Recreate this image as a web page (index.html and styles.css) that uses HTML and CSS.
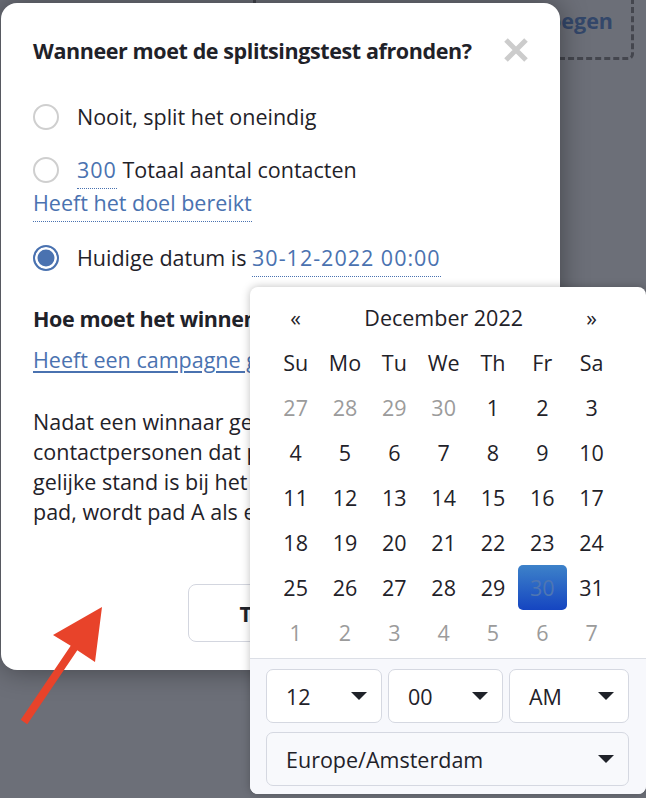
FILE: index.html
```html
<!DOCTYPE html>
<html>
<head>
<title>Splitsingstest</title>
<link rel="stylesheet" href="styles.css">
</head>
<body>
  <div class="dropzone"><span>+ Pad toevoegen</span></div>

  <div class="modal">
    <div class="modal-head">
      <h3>Wanneer moet de splitsingstest afronden?</h3>
      <button class="close" aria-label="Sluiten">
        <svg width="26" height="26" viewBox="0 0 26 26"><path d="M3 3 L23 23 M23 3 L3 23" stroke="#cccccc" stroke-width="5"/></svg>
      </button>
    </div>

    <label class="option first"><span class="radio"></span><span>Nooit, split het oneindig</span></label>
    <label class="option second"><span class="radio"></span><span><a class="dotted num">300</a> Totaal aantal contacten</span></label>
    <div class="goal"><a class="dotted">Heeft het doel bereikt</a></div>
    <label class="option third"><span class="radio checked"></span><span>Huidige datum is <a class="dotted num">30-12-2022 00:00</a></span></label>

    <h4>Hoe moet het winnende pad worden bepaald?</h4>
    <a class="metric">Heeft een campagne geopend</a>

    <p class="note">Nadat een winnaar gekozen is, ontvangen alle<br>contactpersonen dat pad. Als er een<br>gelijke stand is bij het bepalen van het winnende<br>pad, wordt pad A als eerste gekozen.</p>

    <div class="actions">
      <button class="btn">Terug</button>
      <button class="btn primary">Opslaan</button>
    </div>
  </div>

  <div class="datepicker">
    <div class="cal">
      <span>«</span><span class="month">December 2022</span><span>»</span>
      <span>Su</span><span>Mo</span><span>Tu</span><span>We</span><span>Th</span><span>Fr</span><span>Sa</span>
      <span class="muted">27</span><span class="muted">28</span><span class="muted">29</span><span class="muted">30</span><span>1</span><span>2</span><span>3</span>
      <span>4</span><span>5</span><span>6</span><span>7</span><span>8</span><span>9</span><span>10</span>
      <span>11</span><span>12</span><span>13</span><span>14</span><span>15</span><span>16</span><span>17</span>
      <span>18</span><span>19</span><span>20</span><span>21</span><span>22</span><span>23</span><span>24</span>
      <span>25</span><span>26</span><span>27</span><span>28</span><span>29</span><span class="active">30</span><span>31</span>
      <span class="muted">1</span><span class="muted">2</span><span class="muted">3</span><span class="muted">4</span><span class="muted">5</span><span class="muted">6</span><span class="muted">7</span>
    </div>
    <div class="time">
      <div class="row">
        <div class="sel hour">12<i class="caret"></i></div>
        <div class="sel minute">00<i class="caret"></i></div>
        <div class="sel ampm">AM<i class="caret"></i></div>
      </div>
      <div class="sel tz">Europe/Amsterdam<i class="caret"></i></div>
    </div>
  </div>

  <svg class="arrow" width="120" height="150" viewBox="0 0 120 150">
    <polygon points="102,17 53,45 70.7,55.8 20.7,129.8 27.3,134.2 77.3,60.2 95,72" fill="#e8432a"/>
  </svg>
</body>
</html>
```

FILE: styles.css
```css
body {
  margin: 0;
  width: 646px;
  height: 798px;
  overflow: hidden;
  position: relative;
  background-color: #6c6f78;
  font-family: "Open Sans", sans-serif;
  font-size: 21.5px;
  color: #1f2229;
}

/* pagina achter de overlay */
.dropzone {
  position: absolute;
  left: 253px;
  top: -20px;
  width: 381px;
  height: 80px;
  box-sizing: border-box;
  border: 3px dashed #44464e;
  border-radius: 6px;
  display: flex;
  justify-content: flex-end;
  align-items: center;
  padding-right: 18px;
  font-weight: 700;
  color: #33476a;
}

.modal {
  position: absolute;
  left: 1px;
  top: 3px;
  width: 559px;
  height: 667px;
  box-sizing: border-box;
  background-color: white;
  border-radius: 16px;
  padding: 34px 31px 0 32px;
  box-shadow: 0 0 28px rgba(0, 0, 0, 0.4);
  overflow: hidden;
}

.modal-head {
  display: flex;
  justify-content: space-between;
  align-items: center;
  height: 28px;
}

h3 {
  margin: 0;
  font-size: 21.5px;
  font-weight: 700;
  line-height: 28px;
  letter-spacing: -0.4px;
}

.close {
  width: 26px;
  height: 26px;
  border: none;
  background: none;
  padding: 0;
  margin-top: -3px;
}

.option {
  display: flex;
  align-items: center;
  gap: 18px;
  line-height: 30px;
}

.option.first { margin-top: 37px; }
.option.second { margin-top: 23px; }
.option.third { margin-top: 25px; }

.radio {
  flex: none;
  width: 26px;
  height: 26px;
  box-sizing: border-box;
  border: 2px solid #cfcfcf;
  border-radius: 50%;
}

.radio.checked {
  border: 2.5px solid #4a72b0;
  background-color: #4a72b0;
  box-shadow: inset 0 0 0 2.5px white;
}

.dotted {
  color: #4a72b0;
  border-bottom: 1px dotted #4a72b0;
  padding-bottom: 4px;
  text-decoration: none;
}

.num {
  letter-spacing: 1px;
}

.goal {
  margin-top: 3px;
  line-height: 30px;
}

h4 {
  margin: 31px 0 0;
  font-size: 21.5px;
  font-weight: 700;
  line-height: 30px;
  letter-spacing: -0.4px;
  white-space: nowrap;
}

.metric {
  display: block;
  margin-top: 11px;
  line-height: 30px;
  color: #4a72b0;
  text-decoration: underline;
  text-underline-offset: 3px;
  white-space: nowrap;
}

.note {
  margin: 32px 0 0;
  line-height: 30px;
  white-space: nowrap;
}

.actions {
  display: flex;
  justify-content: flex-end;
  gap: 13px;
  margin-top: 57px;
}

.btn {
  width: 164px;
  height: 58px;
  border: 1px solid #d3d6df;
  border-radius: 8px;
  background-color: white;
  font-family: "Open Sans", sans-serif;
  font-size: 21.5px;
  font-weight: 700;
  color: #1f2229;
}

.btn.primary {
  background-color: #3a6fc1;
  border-color: #3a6fc1;
  color: white;
}

/* datumkiezer */
.datepicker {
  position: absolute;
  left: 250px;
  top: 287px;
  width: 396px;
  height: 507px;
  box-sizing: border-box;
  background-color: white;
  border-radius: 8px;
  box-shadow: 0 0 8px rgba(0, 0, 0, 0.25);
  overflow: hidden;
  display: flex;
  flex-direction: column;
}

.cal {
  display: grid;
  grid-template-columns: repeat(7, 49.33px);
  grid-auto-rows: 45px;
  padding: 8px 0 3px 21px;
}

.cal span {
  display: flex;
  align-items: center;
  justify-content: center;
}

.cal .month {
  grid-column: span 5;
}

.cal .muted {
  color: #9b9b9b;
}

.cal .active {
  border-radius: 5px;
  background: linear-gradient(#3d82c9, #1545c1);
  color: #4e76b3;
}

.time {
  flex: 1;
  border-top: 1px solid #dcdfe6;
  background-color: #f7f8fc;
  padding: 10px 17px 0 16px;
}

.row {
  display: flex;
  gap: 6px;
}

.sel {
  height: 54px;
  box-sizing: border-box;
  border: 1px solid #d5d8e1;
  border-radius: 7px;
  background-color: white;
  display: flex;
  align-items: center;
  justify-content: space-between;
  padding: 0 14px 0 19px;
}

.sel.hour { width: 116px; }
.sel.minute { width: 115px; }
.sel.ampm { width: 120px; }

.sel.tz {
  margin-top: 9px;
  background-color: #f8f9fc;
}

.caret {
  width: 0;
  height: 0;
  border-left: 8px solid transparent;
  border-right: 8px solid transparent;
  border-top: 8px solid #1f2229;
}

.arrow {
  position: absolute;
  left: 0;
  top: 590px;
}
```
